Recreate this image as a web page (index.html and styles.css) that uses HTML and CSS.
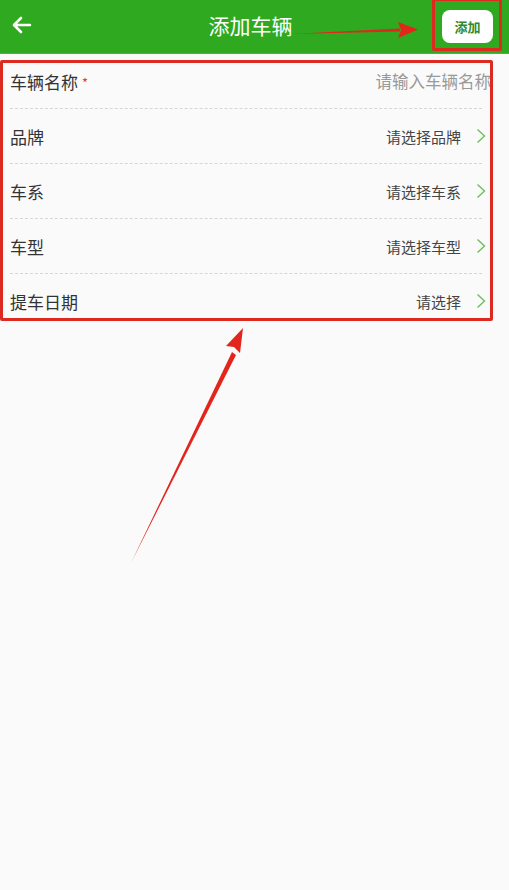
FILE: index.html
```html
<!DOCTYPE html>
<html lang="zh-CN">
<head>
    <meta charset="UTF-8">
    <meta name="viewport" content="width=device-width, initial-scale=1.0">
    <title>添加车辆</title>
    <link rel="stylesheet" href="styles.css">
</head>
<body>

    <div class="header">
        <span class="back">
            <svg width="20" height="18" viewBox="0 0 20 18">
                <path d="M18 9H3M9 2L2 9l7 7" fill="none" stroke="#fff" stroke-width="2.6" stroke-linecap="round" stroke-linejoin="round"/>
            </svg>
        </span>
        <h1 class="title">添加车辆</h1>
        <button class="add-btn">添加</button>
    </div>

    <div class="form">
        <div class="row row-input">
            <span class="label">车辆名称<i class="star">*</i></span>
            <span class="placeholder">请输入车辆名称</span>
        </div>
        <div class="divider"></div>
        <div class="row">
            <span class="label">品牌</span>
            <span class="value">请选择品牌</span>
            <span class="chevron"><svg width="10" height="16" viewBox="0 0 10 16"><path d="M1.5 1.5l7 6.5-7 6.5" fill="none" stroke="#6cbf5c" stroke-width="1.4"/></svg></span>
        </div>
        <div class="divider"></div>
        <div class="row">
            <span class="label">车系</span>
            <span class="value">请选择车系</span>
            <span class="chevron"><svg width="10" height="16" viewBox="0 0 10 16"><path d="M1.5 1.5l7 6.5-7 6.5" fill="none" stroke="#6cbf5c" stroke-width="1.4"/></svg></span>
        </div>
        <div class="divider"></div>
        <div class="row">
            <span class="label">车型</span>
            <span class="value">请选择车型</span>
            <span class="chevron"><svg width="10" height="16" viewBox="0 0 10 16"><path d="M1.5 1.5l7 6.5-7 6.5" fill="none" stroke="#6cbf5c" stroke-width="1.4"/></svg></span>
        </div>
        <div class="divider"></div>
        <div class="row">
            <span class="label">提车日期</span>
            <span class="value">请选择</span>
            <span class="chevron"><svg width="10" height="16" viewBox="0 0 10 16"><path d="M1.5 1.5l7 6.5-7 6.5" fill="none" stroke="#6cbf5c" stroke-width="1.4"/></svg></span>
        </div>
    </div>

    <!-- annotations drawn over the screenshot -->
    <div class="mark mark-btn"></div>
    <div class="mark mark-form"></div>
    <svg class="arrows" width="509" height="890" viewBox="0 0 509 890">
        <path d="M290 34 L400 28.5 L400 31.5 Z" fill="#e3261c"/>
        <path d="M418 29.5 L398 22 L401 30 L398 38 Z" fill="#e3261c"/>
        <path d="M131 563 L232 352 L236 355 Z" fill="#e3261c"/>
        <path d="M243 328 L226 346 L234 347 L240 353 Z" fill="#e3261c"/>
    </svg>

</body>
</html>
```

FILE: styles.css
```css
body {
    margin: 0;
    padding: 0;
    background-color: #fafafa;
    font-family: "Noto Sans CJK SC", "Noto Sans", sans-serif;
    color: #333;
    width: 509px;
    height: 890px;
    position: relative;
    overflow: hidden;
}

.header {
    height: 53px;
    background-color: #2fa91f;
    border-bottom: 1px solid #45b636;
    display: flex;
    align-items: center;
    position: relative;
}

.back {
    width: 20px;
    height: 18px;
    margin-left: 12px;
    margin-top: -4px;
    display: flex;
}

.title {
    position: absolute;
    left: 0;
    right: 8px;
    top: 0;
    margin: 0;
    line-height: 51px;
    text-align: center;
    font-size: 21px;
    font-weight: normal;
    color: #fff;
    pointer-events: none;
}

.add-btn {
    margin-left: auto;
    margin-right: 16px;
    margin-top: -1px;
    width: 51px;
    height: 33px;
    border: none;
    border-radius: 8px;
    background-color: #fff;
    color: #2f8a2a;
    font-family: inherit;
    font-size: 13px;
    font-weight: bold;
    padding: 0;
}

.row {
    height: 54px;
    display: flex;
    align-items: center;
    padding: 0 23px 0 10px;
}

.row-input {
    padding-right: 18px;
}

.label {
    font-size: 17px;
    color: #333;
    white-space: nowrap;
}

.star {
    font-style: normal;
    color: #e53935;
    font-size: 13px;
    margin-left: 4px;
    position: relative;
    top: -1px;
}

.placeholder {
    margin-left: auto;
    font-size: 16.5px;
    color: #999;
    white-space: nowrap;
}

.value {
    margin-left: auto;
    font-size: 15px;
    color: #444;
    white-space: nowrap;
}

.chevron {
    display: flex;
    margin-left: 15px;
}

.divider {
    height: 0;
    margin: 0 27px 0 10px;
    border-top: 1px dashed #d6d6d6;
}

.mark {
    position: absolute;
    border: 3px solid #dc2a20;
    border-radius: 2px;
}

.mark-btn {
    left: 432px;
    top: -2px;
    width: 64px;
    height: 47px;
}

.mark-form {
    left: 0;
    top: 60px;
    width: 487px;
    height: 255px;
}

.arrows {
    position: absolute;
    left: 0;
    top: 0;
    pointer-events: none;
}
```
